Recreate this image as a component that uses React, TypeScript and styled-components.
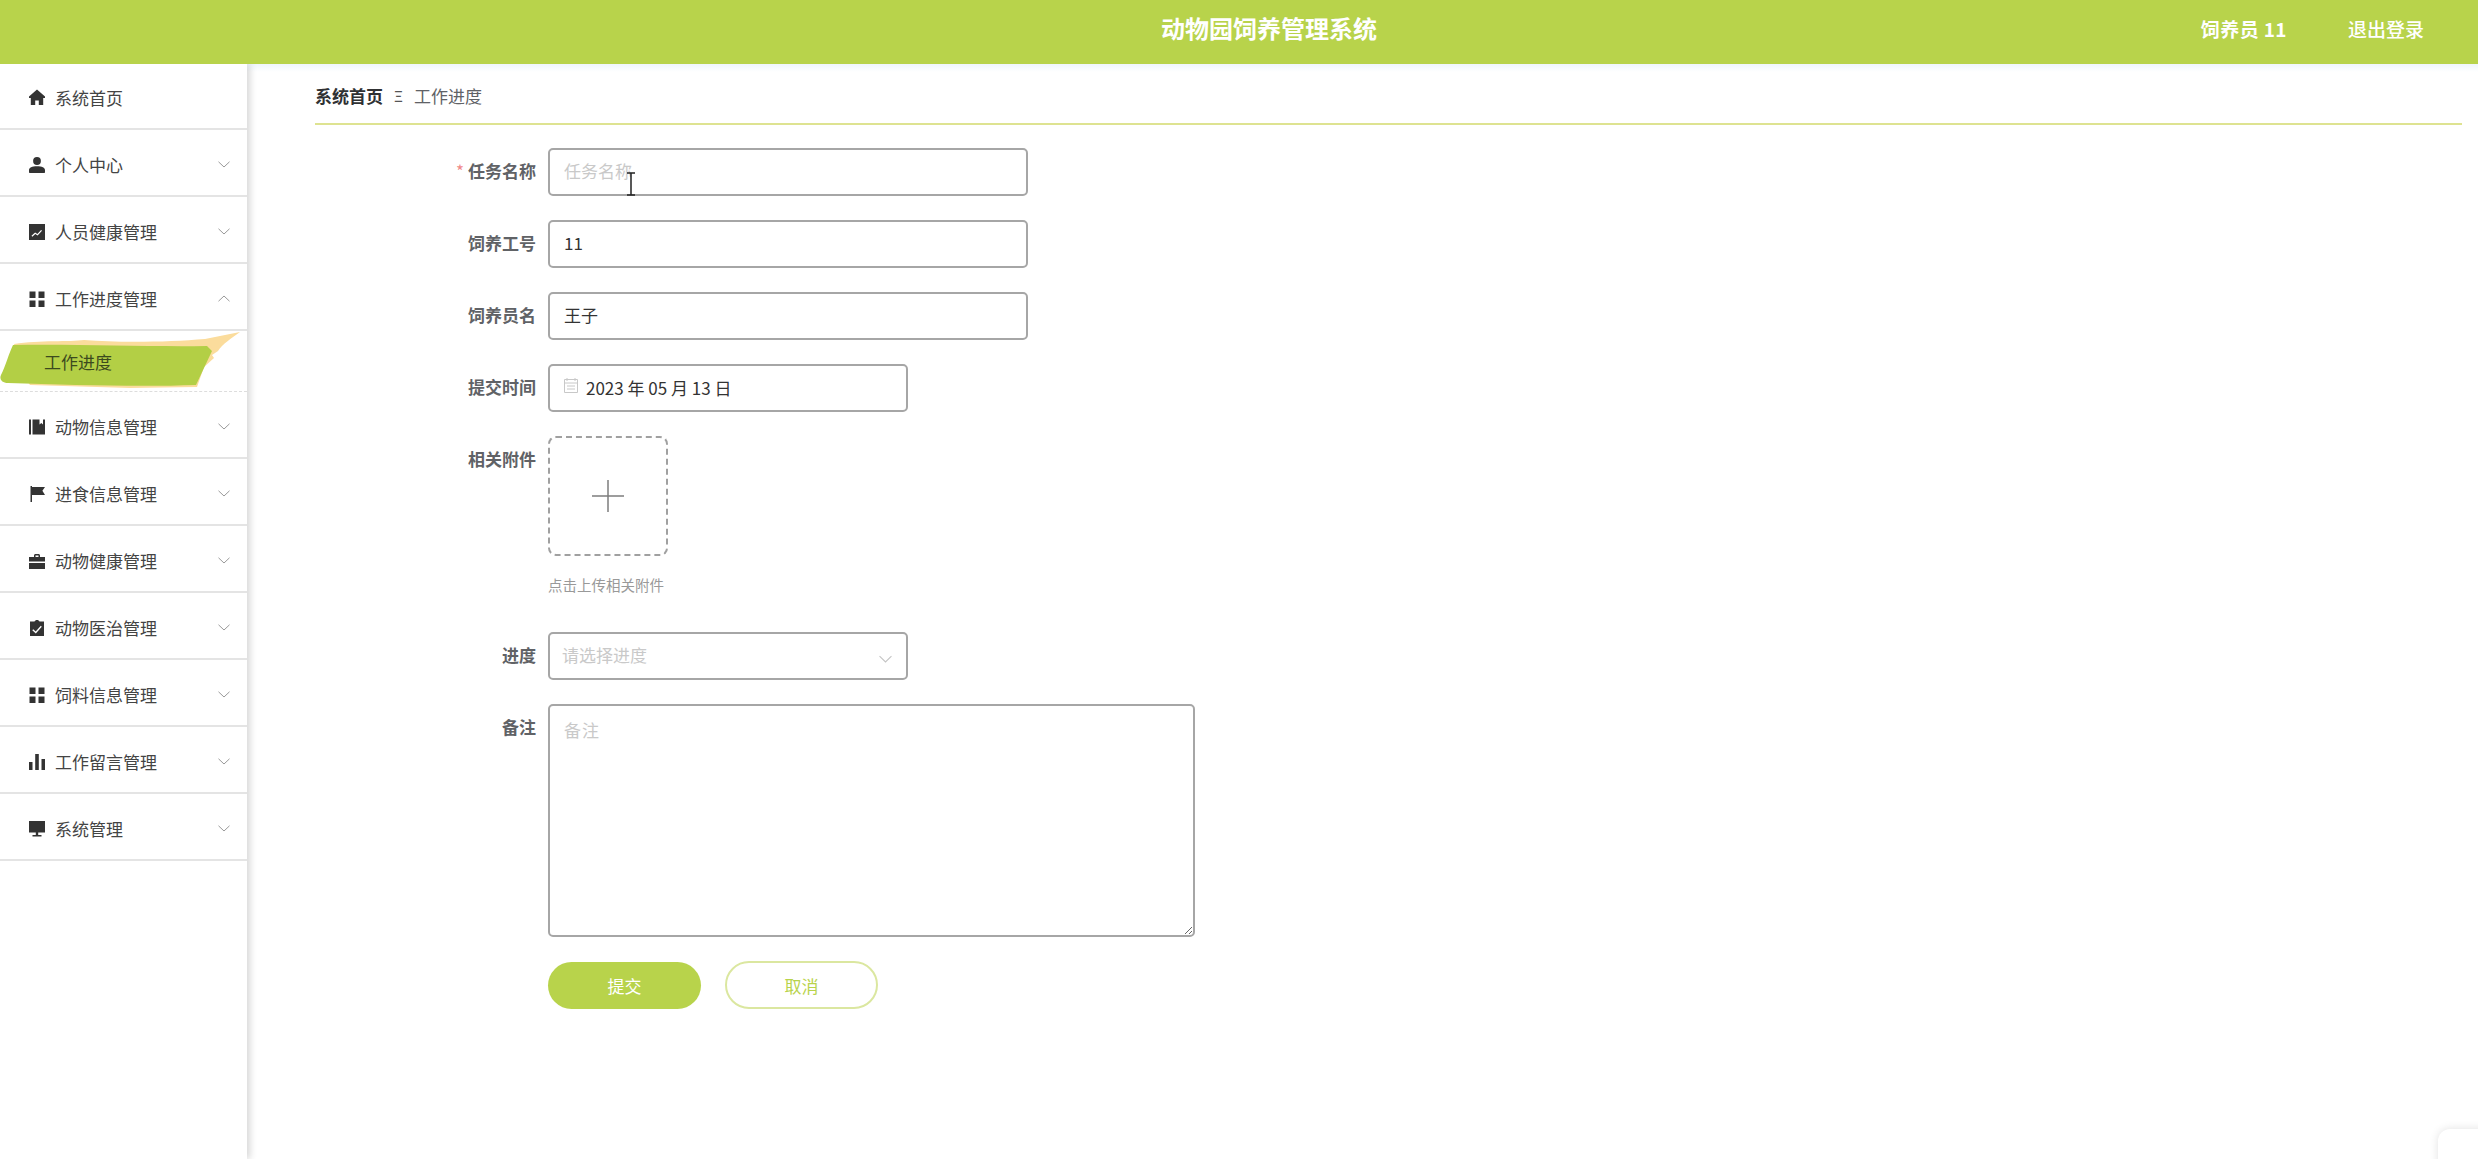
import React from 'react';
import styled, { createGlobalStyle } from 'styled-components';

const GREEN = '#b8d34b';

const GlobalStyle = createGlobalStyle`
  html, body {
    margin: 0;
    padding: 0;
    height: 100%;
    overflow: hidden;
    background: #fff;
    font-family: "Noto Sans CJK SC", "Liberation Sans", sans-serif;
  }
  * {
    box-sizing: border-box;
  }
`;

const iconShapes: Record<string, React.ReactNode> = {
  home: <path d="M8 .6 0 7.400V9h1.800v7h4.400v-4.600h3.600V16h4.400V9H16V7.400z" />,
  user: (
    <>
      <circle cx="8" cy="4" r="3.900" />
      <path d="M0 15.300v-2.100C0 10.500 3 9.200 8 9.200s8 1.300 8 4v2.100c0 .4-.3.700-.7.700H.7c-.4 0-.7-.3-.7-.7z" />
    </>
  ),
  chart: (
    <path
      fillRule="evenodd"
      d="M0 0h16v16H0zM2.500 11.800l.8.9 3-2.700 2.300 1.500 4.400-4.800-.9-.8-3.700 4-2.300-1.500z"
    />
  ),
  grid: <path d="M.5.500h6v6.500h-6zM9.500.500h6v6.500h-6zM.5 9.500h6V16h-6zM9.500 9.500h6V16h-6z" />,
  book: <path d="M0 .5h2v15H0zM3.500.5h4v15h-4zM9 .5h1.500v5l1.800-1.600L14 5.500V.5h2v15H7.500V.5z" />,
  flag: <path d="M1.500 0H3v16H1.500zM3 1h13l-2.600 3.800L16 9H3z" />,
  briefcase: <path d="M5 4V2.500C5 1.700 5.700 1 6.500 1h3c.8 0 1.500.7 1.500 1.500V4h5v4.500H0V4zm1.500 0h3V2.500h-3zM0 10h16v6H0z" />,
  clipboard: (
    <path
      fillRule="evenodd"
      d="M5.500 1.500C5.800.6 6.800 0 8 0s2.200.6 2.500 1.500H15V16H1V1.500zM4.200 9.200 3.300 10.200 6.800 13.500 12.800 6.700 11.800 5.800 6.700 11.500z"
    />
  ),
  bars: <path d="M0 8h3.500v8H0zM6.200 0h3.600v16H6.200zM12.500 5H16v11h-3.500z" />,
  monitor: <path d="M0 0h16v11.500H0zM6.800 11.500h2.400v2.500h3.300v1.500h-9V14h3.300z" />,
};

const menuItems = [
  { icon: 'home', label: '系统首页', plain: true },
  { icon: 'user', label: '个人中心' },
  { icon: 'chart', label: '人员健康管理' },
  { icon: 'grid', label: '工作进度管理', open: true },
  { icon: 'book', label: '动物信息管理' },
  { icon: 'flag', label: '进食信息管理' },
  { icon: 'briefcase', label: '动物健康管理' },
  { icon: 'clipboard', label: '动物医治管理' },
  { icon: 'grid', label: '饲料信息管理' },
  { icon: 'bars', label: '工作留言管理' },
  { icon: 'monitor', label: '系统管理' },
];

const Chevron: React.FC<{ up?: boolean }> = ({ up }) => (
  <ChevronSvg viewBox="0 0 12 7" $up={up}>
    <path d="M.5.8 6 6 11.500.8" fill="none" stroke="currentColor" strokeWidth="1" />
  </ChevronSvg>
);

const App: React.FC = () => (
  <Page>
    <GlobalStyle />
    <Header>
      <Title>动物园饲养管理系统</Title>
      <UserArea>
        <UserName>饲养员 11</UserName>
        <Logout>退出登录</Logout>
      </UserArea>
    </Header>
    <Body>
      <Sidebar>
        {menuItems.map((item, index) => (
          <React.Fragment key={item.label}>
            <MenuRow $first={index === 0}>
              <MenuIcon viewBox="0 0 16 16">{iconShapes[item.icon]}</MenuIcon>
              <MenuLabel>{item.label}</MenuLabel>
              {!item.plain && <Chevron up={item.open} />}
            </MenuRow>
            {item.open && (
              <SubRow>
                <Brush viewBox="0 0 247 60" preserveAspectRatio="none">
                  <path
                    d="M14 13 C40 9 70 11 84 9 C120 12 170 11 205 8 L240 1 C232 7 222 13 218 20 L212 24 L214 27 L204 36 L197 56 L130 57 L30 54 L20 40Z"
                    fill="#fbdc9c"
                  />
                  <path
                    d="M13 14 C80 13 150 16 207 15 L212 20 L196 54 C140 56 70 54 8 52 C2 52 -1 48 1 44 C6 34 9 22 13 14Z"
                    fill="#b3cf45"
                  />
                </Brush>
                <SubLabel>工作进度</SubLabel>
              </SubRow>
            )}
          </React.Fragment>
        ))}
      </Sidebar>
      <Main>
        <Breadcrumb>
          <CrumbStrong>系统首页</CrumbStrong>
          <CrumbSep>Ξ</CrumbSep>
          <CrumbText>工作进度</CrumbText>
        </Breadcrumb>
        <Form>
          <FormRow>
            <FieldLabel $required>任务名称</FieldLabel>
            <FieldWrap>
              <TextInput placeholder="任务名称" readOnly />
              <IBeam viewBox="0 0 10 24">
                <path d="M1 1h8M5 1v22M1 23h8" fill="none" stroke="#222" strokeWidth="1.500" />
              </IBeam>
            </FieldWrap>
          </FormRow>
          <FormRow>
            <FieldLabel>饲养工号</FieldLabel>
            <TextInput defaultValue="11" readOnly />
          </FormRow>
          <FormRow>
            <FieldLabel>饲养员名</FieldLabel>
            <TextInput defaultValue="王子" readOnly />
          </FormRow>
          <FormRow>
            <FieldLabel>提交时间</FieldLabel>
            <DateBox>
              <CalendarIcon viewBox="0 0 16 16">
                <path
                  d="M1.500 2.500h13v13h-13zM1.500 6h13M4 1v3M12 1v3M4 9h8M4 12h8"
                  fill="none"
                  stroke="#c8c8c8"
                  strokeWidth="1"
                />
              </CalendarIcon>
              2023 年 05 月 13 日
            </DateBox>
          </FormRow>
          <UploadRow>
            <FieldLabel>相关附件</FieldLabel>
            <div>
              <UploadBox>
                <PlusIcon viewBox="0 0 32 32">
                  <path d="M16 0v32M0 16h32" fill="none" stroke="#7d7d7d" strokeWidth="1.500" />
                </PlusIcon>
              </UploadBox>
              <UploadHint>点击上传相关附件</UploadHint>
            </div>
          </UploadRow>
          <FormRow>
            <FieldLabel>进度</FieldLabel>
            <SelectBox>
              <SelectPlaceholder>请选择进度</SelectPlaceholder>
              <SelectArrow viewBox="0 0 12 7">
                <path d="M.5.8 6 6.200 11.500.8" fill="none" stroke="#c4c4c4" strokeWidth="1" />
              </SelectArrow>
            </SelectBox>
          </FormRow>
          <FormRow>
            <FieldLabel>备注</FieldLabel>
            <NoteArea placeholder="备注" readOnly />
          </FormRow>
          <ButtonRow>
            <SubmitButton type="button">提交</SubmitButton>
            <CancelButton type="button">取消</CancelButton>
          </ButtonRow>
        </Form>
      </Main>
    </Body>
    <CornerWidget />
  </Page>
);

const Page = styled.div`
  position: relative;
  width: 100%;
  height: 100vh;
  display: flex;
  flex-direction: column;
  overflow: hidden;
`;

const Header = styled.header`
  position: relative;
  height: 64px;
  flex-shrink: 0;
  background-color: ${GREEN};
  display: flex;
  align-items: center;
  justify-content: center;
  color: #fff;
`;

const Title = styled.h1`
  margin: 0 0 8px 60px;
  font-size: 24px;
  font-weight: 700;
  line-height: 1.2;
`;

const UserArea = styled.div`
  position: absolute;
  top: 0;
  right: 54px;
  height: 56px;
  display: flex;
  align-items: center;
  gap: 61px;
`;

const UserName = styled.span`
  font-size: 19px;
  font-weight: 700;
  letter-spacing: 0.4px;
`;

const Logout = styled.span`
  font-size: 19px;
  font-weight: 500;
`;

const Body = styled.div`
  flex: 1;
  display: flex;
  min-height: 0;
  background: linear-gradient(#eff6fb, #fff 8px);
`;

const Sidebar = styled.aside`
  width: 247px;
  flex-shrink: 0;
  background-color: #fff;
  box-shadow: 3px 0 7px rgba(0, 0, 0, 0.16);
`;

const MenuRow = styled.div<{ $first?: boolean }>`
  height: ${({ $first }) => ($first ? 66 : 67)}px;
  padding: ${({ $first }) => ($first ? 2 : 4)}px 17px 0 29px;
  display: flex;
  align-items: center;
  border-bottom: 2px solid #e4e4e4;
`;

const MenuIcon = styled.svg`
  width: 16px;
  height: 16px;
  flex-shrink: 0;
  fill: #333;
`;

const MenuLabel = styled.span`
  flex: 1;
  margin-left: 10px;
  font-size: 17px;
  color: #444;
`;

const ChevronSvg = styled.svg<{ $up?: boolean }>`
  width: 12px;
  height: 7px;
  color: #999;
  transform: ${({ $up }) => ($up ? 'rotate(180deg)' : 'none')};
`;

const SubRow = styled.div`
  position: relative;
  height: 61px;
  padding-left: 44px;
  display: flex;
  align-items: center;
  border-bottom: 1px dashed #ddd;
`;

const Brush = styled.svg`
  position: absolute;
  top: 0;
  left: 0;
  width: 247px;
  height: 60px;
`;

const SubLabel = styled.span`
  position: relative;
  font-size: 17px;
  color: #3c4a1e;
`;

const Main = styled.main`
  flex: 1;
  min-width: 0;
  padding: 0 16px 0 68px;
`;

const Breadcrumb = styled.nav`
  height: 61px;
  padding-top: 3px;
  display: flex;
  align-items: center;
  border-bottom: 2px solid #dee391;
  font-size: 17px;
`;

const CrumbStrong = styled.span`
  font-weight: 700;
  color: #303133;
`;

const CrumbSep = styled.span`
  margin: 0 11px 0 11px;
  font-size: 15px;
  color: #555;
`;

const CrumbText = styled.span`
  color: #606266;
`;

const Form = styled.form`
  margin: 23px 0 0 101px;
`;

const FormRow = styled.div`
  display: flex;
  gap: 12px;
  margin-bottom: 24px;
`;

const UploadRow = styled(FormRow)`
  margin-bottom: 36px;
`;

const FieldLabel = styled.label<{ $required?: boolean }>`
  width: 120px;
  flex-shrink: 0;
  line-height: 46px;
  text-align: right;
  font-size: 17px;
  font-weight: 700;
  color: #606266;

  &::before {
    content: ${({ $required }) => ($required ? '"*"' : 'none')};
    margin-right: 4px;
    font-weight: 400;
    color: #f08a8a;
  }
`;

const FieldWrap = styled.div`
  position: relative;
`;

const TextInput = styled.input`
  display: block;
  width: 480px;
  height: 48px;
  padding: 0 14px 3px;
  border: 2px solid #a6a6a6;
  border-radius: 5px;
  outline: none;
  font-family: inherit;
  font-size: 17px;
  color: #333;

  &::placeholder {
    color: #c9c9c9;
  }
`;

const IBeam = styled.svg`
  position: absolute;
  top: 24px;
  left: 78px;
  width: 10px;
  height: 24px;
`;

const DateBox = styled.div`
  width: 360px;
  height: 48px;
  padding: 0 13px 2px;
  display: flex;
  align-items: center;
  border: 2px solid #a6a6a6;
  border-radius: 5px;
  font-size: 17px;
  color: #333;
`;

const CalendarIcon = styled.svg`
  width: 16px;
  height: 16px;
  margin: -5px 7px 0 0;
`;

const UploadBox = styled.div`
  width: 120px;
  height: 120px;
  display: flex;
  align-items: center;
  justify-content: center;
  border: 2px dashed #a0a0a0;
  border-radius: 8px;
`;

const PlusIcon = styled.svg`
  width: 32px;
  height: 32px;
`;

const UploadHint = styled.div`
  margin-top: 18px;
  font-size: 14.500px;
  line-height: 22px;
  color: #999;
`;

const SelectBox = styled.div`
  width: 360px;
  height: 48px;
  padding: 0 14px 0 12px;
  display: flex;
  align-items: center;
  justify-content: space-between;
  border: 2px solid #a6a6a6;
  border-radius: 5px;
`;

const SelectPlaceholder = styled.span`
  margin-top: -3px;
  font-size: 17px;
  color: #c9c9c9;
`;

const SelectArrow = styled.svg`
  width: 13px;
  height: 8px;
  margin-top: 6px;
`;

const NoteArea = styled.textarea`
  display: block;
  width: 647px;
  height: 233px;
  padding: 12px 14px;
  border: 2px solid #a6a6a6;
  border-radius: 5px;
  outline: none;
  font-family: inherit;
  font-size: 17px;
  line-height: 24px;
  color: #333;

  &::placeholder {
    color: #c9c9c9;
    letter-spacing: 1px;
  }
`;

const ButtonRow = styled.div`
  margin: 1px 0 0 132px;
  display: flex;
  align-items: center;
  gap: 24px;
`;

const SubmitButton = styled.button`
  width: 153px;
  height: 47px;
  border: none;
  border-radius: 24px;
  background-color: ${GREEN};
  font-family: inherit;
  font-size: 17px;
  color: #fff;
`;

const CancelButton = styled.button`
  width: 153px;
  height: 48px;
  border: 2px solid #dbe7a0;
  border-radius: 24px;
  background-color: #fff;
  font-family: inherit;
  font-size: 17px;
  color: ${GREEN};
`;

const CornerWidget = styled.div`
  position: absolute;
  right: -20px;
  bottom: -30px;
  width: 60px;
  height: 60px;
  border-radius: 12px;
  background-color: #fff;
  box-shadow: 0 0 10px rgba(0, 0, 0, 0.12);
`;

export default App;
